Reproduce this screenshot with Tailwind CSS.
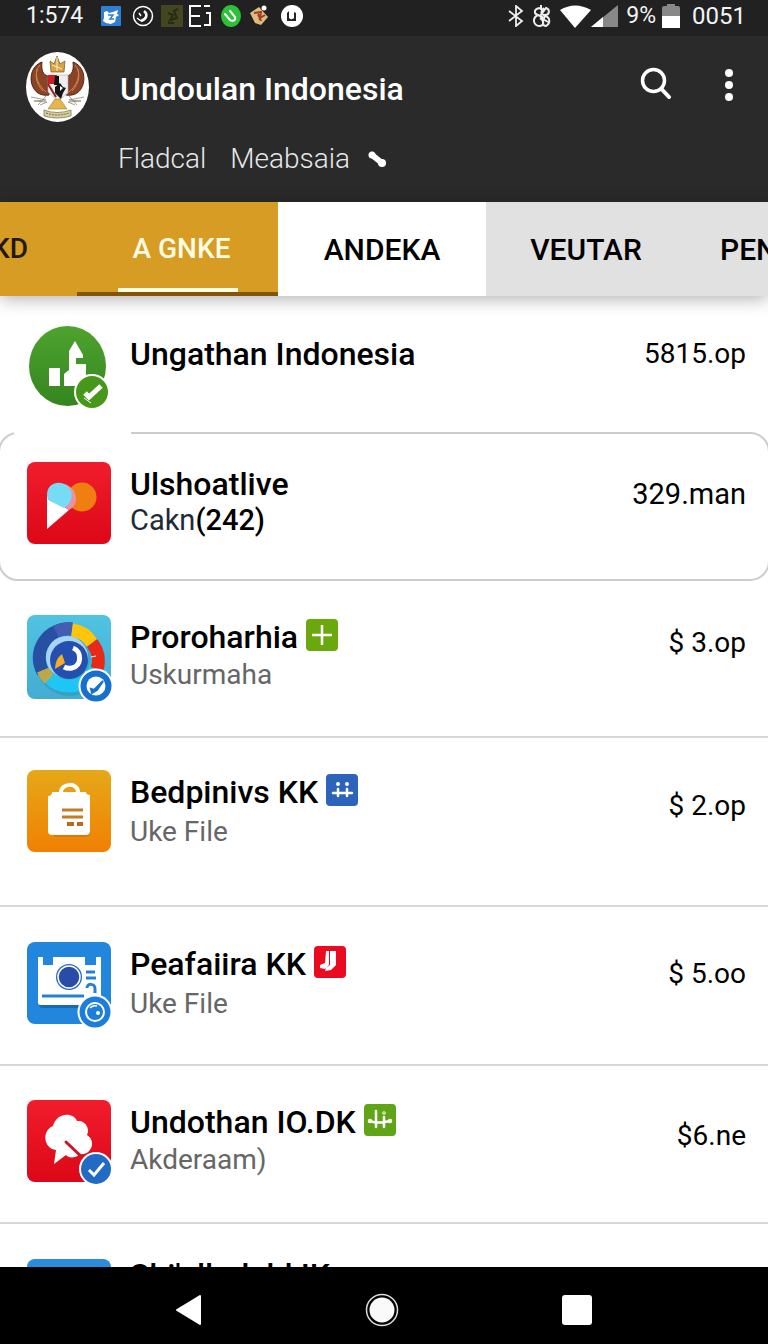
<!DOCTYPE html>
<html lang="id">
<head>
  <meta charset="UTF-8">
  <meta name="viewport" content="width=device-width, initial-scale=1">
  <title>Undoulan Indonesia</title>
  <script src="https://cdn.jsdelivr.net/npm/@tailwindcss/browser@4"></script>
</head>

<body class="flex h-screen flex-col overflow-hidden bg-white font-['Roboto',sans-serif] text-black">

<!-- Status bar -->
<div class="flex h-9 shrink-0 items-center justify-between bg-[#212121] pr-[22px] pb-1 pl-[26px] text-2xl text-gray-100">
  <div class="flex items-center gap-1.5">
    <span class="mr-3 text-[23px]">1:574</span>
    <svg class="size-5" viewBox="0 0 20 20"><rect width="20" height="20" rx="1" fill="#2d80d2"/><path d="M3 6l3-1 2 2 4-1 5-2-1 4 2 1-3 2-1 5-4 2-5-1-3-2 1-3z" fill="#fff"/><path d="M7 9l5 0-3 4 4 0" fill="none" stroke="#2d80d2" stroke-width="1.500"/></svg>
    <svg class="ml-1 size-6" viewBox="0 0 24 24" fill="none" stroke="#fff"><circle cx="12" cy="12" r="9.500" stroke-width="1.500"/><path d="M13 7c4 3 3 8-3 10" stroke-width="2.500"/><path d="M8 9l2 3M6 14l4 3" stroke-width="1.500"/></svg>
    <svg class="w-[22px]" viewBox="0 0 22 22"><rect width="22" height="22" fill="#43461f"/><path d="M7 8l5 2-3 5 7-2-3-7 4-2M7 18h6" fill="none" stroke="#272b16" stroke-width="2"/></svg>
    <svg class="w-[22px]" viewBox="0 0 22 22" fill="none" stroke="#fff" stroke-width="2"><path d="M12 1H1v20h11M1 11h10M15 1h6M17 8h4v12h-6"/></svg>
    <svg class="ml-1 w-5" viewBox="0 0 20 22"><ellipse cx="10" cy="11" rx="10" ry="11" fill="#2fc03a"/><path d="M4 9l5 6c3 2 6 0 5-3L9 6" fill="none" stroke="#fff" stroke-width="2" stroke-linecap="round"/></svg>
    <svg class="ml-0.5 w-5" viewBox="0 0 20 22"><path d="M1 8l9-6 9 10-7 8L6 18z" fill="#d9bd83"/><path d="M5 8l7-1-1 6 5-3M9 9l3 7" fill="none" stroke="#a33e20" stroke-width="2"/><circle cx="15" cy="3" r="2.500" fill="#fff"/></svg>
    <svg class="ml-1.5 w-[22px]" viewBox="0 0 22 22"><circle cx="11" cy="11" r="11" fill="#fff"/><path d="M6 16V8l2-2v7c2 2 4 1 5 0V7l2 1v8z" fill="#222"/></svg>
  </div>
  <div class="flex items-center gap-2">
    <svg class="w-4" viewBox="0 0 16 22" fill="none" stroke="#eee" stroke-width="1.800"><path d="M1 6l13 10-6 5V1l6 5L1 16"/></svg>
    <svg class="w-5" viewBox="0 0 20 24" fill="none" stroke="#eee" stroke-width="2"><path d="M9 1v5M8 4C1 5 2 10 6 11l6 3M6 11c-6 3-5 10 1 11 6 0 5-6 1-8M12 4c-4 4-3 7 1 7 5 0 5-6 1-7l-6 8M13 12c5 1 6 7 1 10-4 0-4-5-1-10M11 15l5 3"/></svg>
    <svg class="-mr-2 w-[31px]" viewBox="0 0 31 23"><path d="M0 5Q15-4 31 5L15 23z" fill="#fff"/></svg>
    <svg class="w-[27px]" viewBox="0 0 27 22"><path d="M0 22L27 0v22z" fill="#888"/><path d="M0 22l12-10v10z" fill="#fff"/></svg>
    <span class="text-[23px]">9%</span>
    <svg class="-ml-0.5 w-[18px]" viewBox="0 0 18 24"><path d="M0 12V4q0-2 2-2h3V0h8v2h3q2 0 2 2v8z" fill="#888"/><path d="M0 12h18v12H0z" fill="#fff"/></svg>
    <span class="ml-1">0051</span>
  </div>
</div>

<!-- App bar -->
<header class="h-[166px] shrink-0 bg-[#2a2a2a] pt-4 pr-[34px] pl-[26px] text-white">
  <div class="flex items-center">
    <svg class="w-[63px]" viewBox="0 0 63 70">
      <ellipse cx="31.500" cy="35" rx="31.500" ry="35" fill="#fff"/>
      <path d="M16 10C5 14 3 27 7 35c3 7 10 9 16 8l-1-19c-5-1-7-6-6-14z" fill="#8a4328" stroke="#512512"/>
      <path d="M47 10c11 4 13 17 9 25-3 7-10 9-16 8l1-19c5-1 7-6 6-14z" fill="#8a4328" stroke="#512512"/>
      <path d="M14 13C8 20 9 31 17 39M11 17c-2 9 2 17 9 23M49 13c6 7 5 18-3 26M52 17c2 9-2 17-9 23" fill="none" stroke="#c98946"/>
      <path d="M25 20l-1-11 4 3 3-8 3 8 5-3-1 11z" fill="#d5a247" stroke="#77501b" stroke-width=".7"/>
      <path d="M26 13l10 4M31 5v14" stroke="#fff0b8"/>
      <path d="M22 23h20v18L32 49l-10-9z" fill="#eee" stroke="#aaa" stroke-width=".6"/>
      <path d="M22 23h9v9h-9z" fill="#c92026"/><path d="M29 24h4v9h-5z" fill="#111"/><path d="M29 35l5-4 3 4 3 1-3 5-2 6-6-6z" fill="#151515"/><path d="M34 34l3 2-3 3z" fill="#fff"/><path d="M22 32l8 13" stroke="#8d211d" stroke-width="2"/>
      <path d="M29 47l-7 10h19l-7-10z" fill="#e4b74d" stroke="#a8772a" stroke-width=".6"/>
      <path d="M5 45l15 3-12 1 13 1-7 3M58 45l-15 3 12 1-13 1 7 3M20 44l-8 9M43 44l8 9" fill="none" stroke="#8b8675" stroke-width=".8"/>
      <path d="M18 58q13 5 27 0v6q-14 4-27 0z" fill="#d6cf9c" stroke="#6f6845" stroke-width=".7"/><path d="M20 61q11 4 23 0" fill="none" stroke="#6f6845" stroke-dasharray="2 1"/>
    </svg>
    <h1 class="mt-1 ml-[31px] flex-1 text-[32px] leading-10 font-medium">Undoulan Indonesia</h1>
    <button type="button" aria-label="Cari" class="mb-2 cursor-pointer"><svg class="size-8" viewBox="0 0 32 32" fill="none" stroke="#fff" stroke-linecap="round"><circle cx="13.500" cy="13.500" r="11" stroke-width="3.500"/><path d="M21.500 22L29 30" stroke-width="4"/></svg></button>
    <button type="button" aria-label="Menu" class="mb-1 ml-[52px] cursor-pointer"><svg class="h-9 w-2.5" viewBox="0 0 10 36" fill="#fff"><circle cx="5" cy="6" r="4"/><circle cx="5" cy="18" r="4"/><circle cx="5" cy="30" r="4"/></svg></button>
  </div>
  <p class="mt-[19px] ml-[92px] flex items-center gap-6 text-[28px] leading-9 font-light text-gray-200">
    <span>Fladcal</span><span>Meabsaia</span>
    <svg class="-ml-1.5 h-4 w-[18px]" viewBox="0 0 18 16"><path d="M4 4L14 12" stroke="#fff" stroke-width="6" stroke-linecap="round"/><circle cx="4" cy="4" r="3.500" fill="#fff"/><circle cx="14" cy="12" r="4" fill="#fff"/></svg>
  </p>
</header>

<!-- Tabs -->
<nav class="z-10 flex h-[94px] shrink-0 overflow-x-clip bg-[#e1e1e2] text-[30px] font-medium whitespace-nowrap shadow-[0_3px_16px_rgba(0,0,0,0.3)]">
  <button type="button" class="flex w-[77px] shrink-0 cursor-pointer items-center justify-end bg-[#d69c23] pr-[49px] text-[28px] text-[#211903]"><span>KD</span></button>
  <button type="button" class="relative w-[201px] shrink-0 cursor-pointer border-b-4 border-[#845409] bg-[#d69c23] pt-1 pl-2 text-[28px] text-[#fffce5]">A GNKE<span class="absolute bottom-0 left-[41px] h-1 w-[120px] bg-[#fffce5]"></span></button>
  <button type="button" class="w-[208px] shrink-0 cursor-pointer bg-white">ANDEKA</button>
  <button type="button" class="w-[200px] shrink-0 cursor-pointer">VEUTAR</button>
  <button type="button" class="shrink-0 cursor-pointer px-[34px]">PEN</button>
</nav>

<!-- List -->
<main class="min-h-0 flex-1 overflow-hidden">
  <ul>
    <li class="flex items-start pt-[30px] pr-[22px] pb-[22px] pl-[27px]">
      <svg class="h-[84px] w-[84px] shrink-0" viewBox="0 0 84 84">
        <defs><linearGradient id="green" x2="0" y2="1"><stop stop-color="#4da32f"/><stop offset="1" stop-color="#35851f"/></linearGradient></defs>
        <ellipse cx="40.500" cy="40" rx="38.500" ry="40" fill="url(#green)"/>
        <path d="M22 42h11v18H22zM37 60V48l5-4V25l6-10 8 14v3h-7v6h10v14l-4 8z" fill="#fff"/>
        <circle cx="65" cy="66" r="18" fill="#fff"/><circle cx="65" cy="66" r="16" fill="#47981a"/>
        <path d="M58 67l4 4 12-11" fill="none" stroke="#fff" stroke-width="5"/><path d="M57 72l7 5" stroke="#fff"/>
      </svg>
      <h2 class="mt-2 ml-[19px] flex-1 text-[32px] leading-10 font-medium">Ungathan Indonesia</h2>
      <span class="mt-2 text-[28px] leading-10">5815.op</span>
    </li>

    <li class="relative -mx-0.5 flex items-start rounded-[20px] border-2 border-[#cbcccd] pt-7 pr-[22px] pb-[33px] pl-[27px]">
      <span class="absolute -top-0.5 left-3.5 h-0.5 w-[117px] bg-white"></span>
      <svg class="h-[84px] w-[84px] shrink-0" viewBox="0 0 84 84">
        <defs><linearGradient id="red" x2="0" y2="1"><stop stop-color="#f11c2c"/><stop offset="1" stop-color="#dc0817"/></linearGradient></defs>
        <rect width="84" height="82" rx="8" fill="url(#red)"/>
        <circle cx="55" cy="35" r="14.500" fill="#ef7f10"/>
        <path d="M20 34l22 14-22 19z" fill="#fff"/>
        <path d="M38 22q11 4 11 15 0 7-7 11l-10-8z" fill="#ea91a8"/>
        <path d="M20 33c0-15 19-16 24-4 2 8-2 14-7 17L21 38z" fill="#76dcf6"/>
      </svg>
      <div class="ml-[19px] flex-1">
        <h2 class="mt-0.5 text-[32px] leading-10 font-medium">Ulshoatlive</h2>
        <p class="-mt-0.5 text-[29px] leading-9 text-gray-800">Cakn<span class="font-medium text-black">(242)</span></p>
      </div>
      <span class="mt-3 text-[29px] leading-10">329.man</span>
    </li>

    <li class="flex items-start border-b-2 border-[#d8d8d9] pt-[34px] pr-[22px] pb-[37px] pl-[27px]">
      <svg class="h-[84px] w-[84px] shrink-0 overflow-visible" viewBox="0 0 84 84">
        <defs><linearGradient id="sky" x2="0" y2="1"><stop stop-color="#50c3e2"/><stop offset="1" stop-color="#43acd3"/></linearGradient></defs>
        <rect width="84" height="84" rx="8" fill="url(#sky)"/>
        <ellipse cx="43" cy="46" rx="35" ry="35" fill="#2585a8" opacity=".35"/>
        <g fill="none" stroke-width="13">
          <circle cx="42" cy="43" r="28" stroke="#20c6f3"/>
          <path d="M16 57A29 29 0 0 1 45 14" stroke="#2750a2"/>
          <path d="M29 17A29 29 0 0 1 45 14" stroke="#435db3"/>
          <path d="M45 15A28 28 0 0 1 65 28" stroke="#ffc50a"/>
          <path d="M65 28A28 28 0 0 1 70 54" stroke="#e92918"/>
          <path d="M16 55A28 28 0 0 0 22 64" stroke="#bca74b"/>
        </g>
        <circle cx="40" cy="42" r="21" fill="#a9d3f3"/><circle cx="42" cy="45" r="19" fill="#234fae"/>
        <path d="M46 33c9 3 9 18-1 20-4 1-8-1-8-1" fill="none" stroke="#fff" stroke-width="5"/><path d="M35 39l3 9-10 6q0-10 7-15z" fill="#f7ac25"/><path d="M64 42l5-1" stroke="#fff"/>
        <circle cx="69" cy="71" r="17.500" fill="#fff"/><circle cx="69" cy="71" r="15.500" fill="#1670cd"/><circle cx="69" cy="71" r="9.500" fill="#fff"/><path d="M64 74l3 1 9-9-6 9-5 3z" fill="#1670cd" stroke="#1670cd" stroke-width="2"/>
      </svg>
      <div class="ml-[19px] flex-1">
        <h2 class="mt-0.5 flex items-center gap-2 text-[32px] leading-10 font-medium">Proroharhia
          <svg class="mb-1 w-8" viewBox="0 0 32 32"><rect width="32" height="32" rx="4" fill="#6aa80d"/><path d="M16 6v20M6 16h20" stroke="#fff" stroke-width="2.500"/></svg></h2>
        <p class="text-[28px] leading-9 text-[#666]">Uskurmaha</p>
      </div>
      <span class="mt-2 text-[28px] leading-10">$ 3.op</span>
    </li>

    <li class="flex items-start border-b-2 border-[#d8d8d9] pt-8 pr-[22px] pb-[51px] pl-[27px]">
      <svg class="h-[84px] w-[84px] shrink-0" viewBox="0 0 84 84">
        <defs><linearGradient id="amber" x2="0" y2="1"><stop stop-color="#e5a819"/><stop offset="1" stop-color="#f18003"/></linearGradient></defs>
        <rect width="84" height="82" rx="8" fill="url(#amber)"/>
        <path d="M26 64h34q3 0 3-4l1 4q-2 3-5 3H28z" fill="#a95e0c" opacity=".3"/>
        <path d="M34 23v-1c0-9 17-10 17 0v1" fill="none" stroke="#fff" stroke-width="4"/>
        <path d="M25 22h34q0 3 4 3v36q0 4-4 4H25q-4 0-4-4V26q4 0 4-4z" fill="#fff"/>
        <path d="M35 40h21M35 47h21" stroke="#c37b26" stroke-width="3"/><path d="M40 54h7M50 54h6" stroke="#b96b1d" stroke-width="4"/>
      </svg>
      <div class="ml-[19px] flex-1">
        <h2 class="mt-0.5 flex items-center gap-2 text-[32px] leading-10 font-medium">Bedpinivs KK
          <svg class="mb-1 w-8" viewBox="0 0 32 32"><rect width="32" height="32" rx="4" fill="#2e63bc"/><circle cx="12" cy="10" r="2" fill="#fff"/><circle cx="21" cy="10" r="2" fill="#fff"/><path d="M7 19h19M12 15v7M21 15v7" stroke="#fff" stroke-width="2.500" stroke-linecap="round"/></svg></h2>
        <p class="mt-0.5 text-[28px] leading-9 text-[#666]">Uke File</p>
      </div>
      <span class="mt-4 text-[28px] leading-10">$ 2.op</span>
    </li>

    <li class="flex items-start border-b-2 border-[#d8d8d9] pt-[35px] pr-[22px] pb-[38px] pl-[27px]">
      <svg class="h-[84px] w-[84px] shrink-0 overflow-visible" viewBox="0 0 84 84">
        <rect width="84" height="82" rx="8" fill="#2186dc"/>
        <path d="M10 61h52v5H14z" fill="#176bb5"/>
        <path d="M11 15h5v8h10v-8h32v8h11v-8h5v43L61 63H13q-2 0-2-2z" fill="#fff"/>
        <path d="M15 54h42M59 30h9M59 36h10" stroke="#2680d0" stroke-width="3"/>
        <circle cx="42" cy="35" r="13" fill="#2567bf"/><circle cx="42" cy="35" r="11" fill="#284ca7" stroke="#fff" stroke-width="1.500"/>
        <path d="M60 46c0-5 8-5 8 1v4" fill="none" stroke="#2680d0" stroke-width="3"/>
        <circle cx="68" cy="70" r="17.500" fill="#fff"/><circle cx="68" cy="70" r="15.500" fill="#1d7ddd"/><circle cx="68" cy="70" r="9" fill="none" stroke="#fff" stroke-width="2"/><circle cx="71" cy="71" r="2" fill="#fff"/><path d="M63 66q3-3 7-2" fill="none" stroke="#fff" stroke-width="1.500"/>
      </svg>
      <div class="ml-[19px] flex-1">
        <h2 class="mt-0.5 flex items-center gap-2 text-[32px] leading-10 font-medium">Peafaiira KK
          <svg class="mb-1 w-8" viewBox="0 0 32 32"><rect width="32" height="32" rx="4" fill="#ea0b20"/><path d="M12 5h3v14l-4 4-5-1v-3l5-2zM16 5h6v14l-5 5-6 1 1-3 4-3z" fill="#fff"/></svg></h2>
        <p class="mt-0.5 text-[28px] leading-9 text-[#666]">Uke File</p>
      </div>
      <span class="mt-3 text-[28px] leading-10">$ 5.oo</span>
    </li>

    <li class="flex items-start border-b-2 border-[#d8d8d9] pt-[34px] pr-[22px] pb-[38px] pl-[27px]">
      <svg class="h-[84px] w-[84px] shrink-0 overflow-visible" viewBox="0 0 84 84">
        <rect width="84" height="82" rx="8" fill="url(#red)"/>
        <path d="M27 64l2-14C17 49 14 31 26 26c3-13 20-15 24-5 9-1 13 8 10 14 10 6 4 21-7 19-5 5-12 4-14 1z" fill="#fff"/>
        <path d="M39 42l19 18" stroke="#c91525" stroke-width="3" stroke-linecap="round"/>
        <circle cx="69" cy="69" r="17" fill="#fff"/><circle cx="69" cy="69" r="15" fill="#226bc4"/><path d="M62 70l5 5 10-12" fill="none" stroke="#fff" stroke-width="3"/>
      </svg>
      <div class="ml-[19px] flex-1">
        <h2 class="mt-0.5 flex items-center gap-2 text-[32px] leading-10 font-medium">Undothan IO.DK
          <svg class="mb-1 w-8" viewBox="0 0 32 32" fill="none" stroke="#fff" stroke-width="2.500" stroke-linecap="round"><rect width="32" height="32" rx="4" fill="#5fa516" stroke="none"/><path d="M7 17q4 3 19 0M12 7v16M20 13v10"/><circle cx="20" cy="9" r=".5"/><circle cx="6" cy="17" r="1"/><circle cx="26" cy="17" r="1"/></svg></h2>
        <p class="text-[28px] leading-9 text-[#666]">Akderaam)</p>
      </div>
      <span class="mt-4 text-[28px] leading-10">$6.ne</span>
    </li>

    <li class="flex items-start pt-[35px] pr-[22px] pl-[27px]">
      <svg class="h-[84px] w-[84px] shrink-0" viewBox="0 0 84 84"><rect width="84" height="82" rx="8" fill="#2b8bdd"/></svg>
      <h2 class="ml-[19px] text-[32px] leading-8 font-medium">Shi'ellodebl IK</h2>
    </li>
  </ul>
</main>

<!-- System navigation -->
<footer class="flex h-[77px] shrink-0 items-center justify-around bg-black px-[94px] pt-2">
  <button type="button" aria-label="Kembali" class="cursor-pointer"><svg class="h-8 w-[26px]" viewBox="0 0 26 32"><path d="M1 16L24 2v28z" fill="#fff" stroke="#fff" stroke-width="2" stroke-linejoin="round"/></svg></button>
  <button type="button" aria-label="Beranda" class="cursor-pointer"><svg class="size-[34px]" viewBox="0 0 34 34"><circle cx="17" cy="17" r="15.500" fill="none" stroke="#ddd" stroke-width="1.500"/><circle cx="17" cy="17" r="12.500" fill="#fafafa"/></svg></button>
  <button type="button" aria-label="Aplikasi terbaru" class="cursor-pointer"><svg class="size-[30px]" viewBox="0 0 30 30"><rect width="30" height="30" rx="3" fill="#fff"/></svg></button>
</footer>

</body>
</html>
